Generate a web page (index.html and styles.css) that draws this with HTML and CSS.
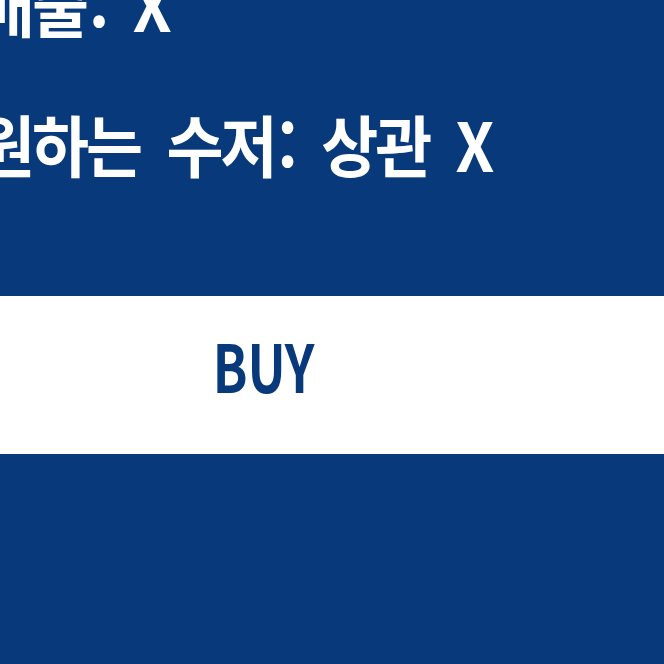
FILE: index.html
```html
<!DOCTYPE html>
<html lang="ko">
<head>
  <meta charset="UTF-8" />
  <title>Buy</title>
  <meta name="viewport" content="width=device-width, initial-scale=1.0" />
  <link rel="stylesheet" href="styles.css">
</head>
<body>

  <div class="page">
    <!-- CONDITIONS -->
    <div class="info">
      <p>매출<span class="colon">:</span> X</p>
      <p>원하는 수저<span class="colon">:</span> 상관 X</p>
    </div>

    <!-- BUY BUTTON -->
    <button class="buy-button"><span>BUY</span></button>
  </div>

</body>
</html>
```

FILE: styles.css
```css
/* ---------------------------------------------
   GENERAL / RESET
--------------------------------------------- */
* {
  margin: 0;
  padding: 0;
  box-sizing: border-box;
  font-family: "Noto Sans CJK KR", "Noto Sans", sans-serif;
}

html,
body {
  background: #083a7b;
  overflow: hidden;
}

body {
  min-height: 100vh;
}

/* Page is wider than the window, scrolled a little to the right */
.page {
  width: 801px;
  margin-left: -137px;
  margin-top: -28px;
  display: flex;
  flex-direction: column;
}

/* ---------------------------------------------
   CONDITIONS
--------------------------------------------- */
.info {
  display: flex;
  flex-direction: column;
  gap: 78px;
  padding-left: 115px;
}
.info p {
  color: #ffffff;
  font-size: 62px;
  font-weight: 700;
  line-height: 1;
  letter-spacing: -3px;
  word-spacing: 12px;
  white-space: nowrap;
  transform: scaleY(1.08); /* the text is drawn a little tall */
}
.info .colon {
  margin-left: 3px;
}

/* ---------------------------------------------
   BUY BUTTON
--------------------------------------------- */
.buy-button {
  margin-top: 122px;
  height: 158px;
  width: 100%;
  padding-bottom: 22px;
  background: #ffffff;
  border: none;
  color: #083a7b;
  font-size: 51px;
  font-weight: 700;
  cursor: pointer;
}
.buy-button span {
  display: inline-block;
  line-height: 1;
  transform: scaleY(1.31);
}
```
